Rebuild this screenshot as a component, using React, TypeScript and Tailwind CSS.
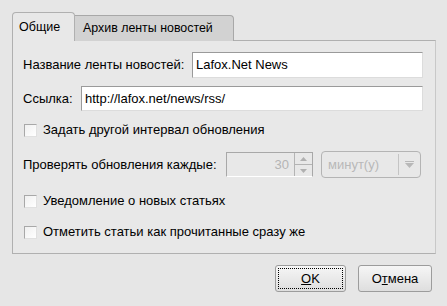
import React from "react";

const font = { fontFamily: '"Liberation Sans", Arial, sans-serif' };

function CheckRow({ label, mt }: { label: string; mt: string }) {
  return (
    <div className={`flex items-center h-[20px] ${mt}`}>
      <div className="w-[13px] h-[13px] ml-[1px] bg-gradient-to-br from-[#f0f0f0] to-white border border-[#a8a8a8] border-b-[#e0e0e0] border-r-[#e0e0e0]" />
      <span className="ml-[6px] text-[13px] text-black">{label}</span>
    </div>
  );
}

export default function App() {
  return (
    <div
      className="w-[447px] h-[306px] bg-[#e6e6e6] pt-[12px] pl-[12px] pr-[11px] text-[13px] text-black overflow-hidden"
      style={font}
    >
      {/* Tabs */}
      <div className="flex items-end h-[29px]">
        <div className="relative z-10 w-[63px] h-[29px] bg-[#e8e8e8] border border-b-0 border-[#b0b0b0] rounded-t-[4px] flex items-center pl-[6px] pt-[1px] text-[12.5px]">
          Общие
        </div>
        <div className="w-[159px] h-[26px] bg-[#d2d2d2] border border-b-0 border-l-0 border-[#a8a8a8] rounded-tr-[4px] flex items-center pl-[8px] text-[12.4px]">
          Архив ленты новостей
        </div>
      </div>
      {/* Panel */}
      <div className="-mt-[1px] w-[424px] h-[214px] bg-[#e8e8e8] border border-[#b0b0b0] border-r-[#c8c8c8] pl-[10px] pr-[12px] pt-[11px] flex flex-col">
        <div className="flex items-center h-[26px]">
          <span className="w-[169px]">Название ленты новостей:</span>
          <div className="flex-1 h-[26px] bg-white border border-[#9a9a9a] border-b-[#dcdcdc] border-r-[#dcdcdc] flex items-center pl-[3px]">
            Lafox.Net News
          </div>
        </div>
        <div className="flex items-center h-[25px] mt-[8px]">
          <span className="w-[58px]">Ссылка:</span>
          <div className="flex-1 h-[25px] bg-white border border-[#9a9a9a] border-b-[#dcdcdc] border-r-[#dcdcdc] flex items-center pl-[3px]">
            http://lafox.net/news/rss/
          </div>
        </div>
        <CheckRow label="Задать другой интервал обновления" mt="mt-[9px]" />
        <div className="flex items-center h-[27px] mt-[11px]">
          <span className="w-[203px]">Проверять обновления каждые:</span>
          <div className="w-[87px] h-[25px] flex border border-[#a8a8a8] border-b-white">
            <div className="flex-1 flex items-center justify-end pr-[5px] text-[#b4b4b4]">30</div>
            <div className="w-[18px] flex flex-col border-l border-[#b4b4b4]">
              <div className="flex-1 flex items-center justify-center border-b border-[#b4b4b4]">
                <svg width="7" height="4" viewBox="0 0 7 4"><path d="M0 4 L3.5 0 L7 4 Z" fill="#b0b0b0" /></svg>
              </div>
              <div className="flex-1 flex items-center justify-center">
                <svg width="7" height="4" viewBox="0 0 7 4"><path d="M0 0 L3.5 4 L7 0 Z" fill="#b0b0b0" /></svg>
              </div>
            </div>
          </div>
          <div className="ml-[8px] w-[100px] h-[27px] rounded-[4px] border border-[#b4b4b4] flex items-center">
            <span className="flex-1 pl-[6px] text-[#b8b8b8]">минут(у)</span>
            <div className="w-[1px] h-[21px] bg-white border-l border-[#c4c4c4]" />
            <div className="w-[21px] flex flex-col items-center justify-center">
              <div className="w-[9px] h-[1px] bg-[#b8b8b8] mb-[1px]" />
              <svg width="9" height="5" viewBox="0 0 9 5"><path d="M0 0 L4.5 5 L9 0 Z" fill="#b8b8b8" /></svg>
            </div>
          </div>
        </div>
        <CheckRow label="Уведомление о новых статьях" mt="mt-[13px]" />
        <CheckRow label="Отметить статьи как прочитанные сразу же" mt="mt-[11px]" />
      </div>
      {/* Buttons */}
      <div className="flex justify-end mt-[11px] pr-[4px] gap-[12px]">
        <button className="w-[71px] h-[27px] rounded-[3px] border border-[#9c9c9c] bg-gradient-to-b from-[#f6f6f6] to-[#dedede] p-[2px]">
          <div className="w-full h-full border border-dotted border-black flex items-center justify-center">
            <span><span className="underline">O</span>K</span>
          </div>
        </button>
        <button className="w-[74px] h-[27px] rounded-[3px] border border-[#9c9c9c] bg-gradient-to-b from-[#f6f6f6] to-[#dedede] flex items-center justify-center">
          <span>О<span className="underline">т</span>мена</span>
        </button>
      </div>
    </div>
  );
}
